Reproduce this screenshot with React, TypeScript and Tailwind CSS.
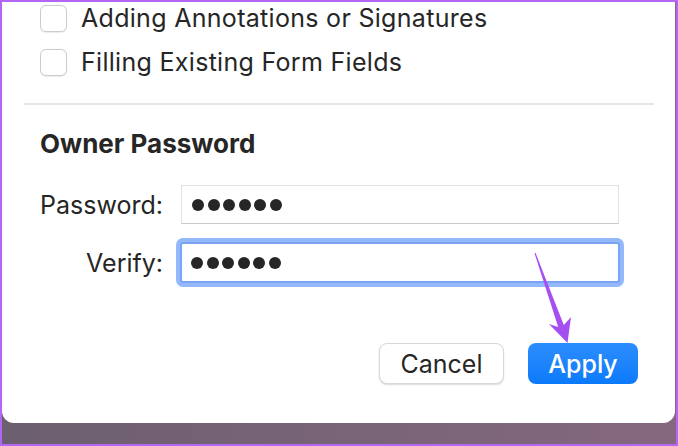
import React from "react";

const font = { fontFamily: 'Inter, "Noto Sans", "Liberation Sans", sans-serif' };

function Checkbox() {
  return (
    <div className="w-[27px] h-[27px] rounded-[6px] border border-[#cdcdcd] bg-white shadow-[0_0.5px_1px_rgba(0,0,0,0.08)] shrink-0" />
  );
}

function Dots() {
  return (
    <div className="flex items-center gap-[3.5px]">
      {[0, 1, 2, 3, 4, 5].map((i) => (
        <span key={i} className="block w-[12px] h-[12px] rounded-full bg-[#262626]" />
      ))}
    </div>
  );
}

export default function App() {
  return (
    <div className="relative w-[678px] h-[446px] bg-[#b366f4] p-[2px]" style={font}>
      <div className="w-full h-full bg-gradient-to-r from-[#6c5f70] to-[#85687f] overflow-hidden">
        <div className="w-[673px] h-[421px] bg-white rounded-b-[12px] text-[#262626] text-[25px] leading-[28px]">
          <div className="pl-[38px] pt-[2px]">
            <div className="flex items-center gap-[14px] h-[28px]">
              <Checkbox />
              <span className="tracking-[0.3px]">Adding Annotations or Signatures</span>
            </div>
            <div className="flex items-center gap-[14px] h-[28px] mt-[16px]">
              <Checkbox />
              <span className="tracking-[0.3px]">Filling Existing Form Fields</span>
            </div>
          </div>
          <div className="mx-[22px] mt-[27px] h-[2px] bg-[#e6e6e6] w-[630px]" />
          <div className="pl-[38px] mt-[25px] font-bold text-[26px] h-[28px]">Owner Password</div>
          <div className="grid grid-cols-[123px_1fr] items-center gap-x-[18px] pl-[38px] pr-[56px] mt-[27px]">
            <div className="text-right">Password:</div>
            <div className="h-[39px] border border-[#e2e2e2] border-b-[#c9c9c9] bg-white flex items-center pl-[10px]">
              <Dots />
            </div>
            <div className="text-right mt-[18px]">Verify:</div>
            <div className="mt-[18px] -ml-[1px] -mr-[1px] h-[41px] rounded-[3px] border-2 border-[#7aa3f3] shadow-[0_0_0_4px_#93b8fb] bg-white flex items-center pl-[9px]">
              <Dots />
            </div>
          </div>
          <div className="flex justify-end gap-[24px] pr-[37px] mt-[60px]">
            <button className="w-[125px] h-[41px] rounded-[8px] bg-white border border-[#d8d8d8] shadow-[0_1px_1.5px_rgba(0,0,0,0.15)] text-[25px] text-[#262626]">
              Cancel
            </button>
            <button className="w-[110px] h-[41px] rounded-[8px] bg-gradient-to-b from-[#2c8dfd] to-[#0a7afa] text-[25px] text-white font-medium">
              Apply
            </button>
          </div>
        </div>
      </div>
      <svg className="absolute left-0 top-0 pointer-events-none" width="678" height="446" viewBox="0 0 678 446">
        <polygon
          points="534.5,253.2 535.5,252.8 563.8,325 571,317 567.5,343 549,324 558.2,327"
          fill="#a64ff0"
        />
      </svg>
    </div>
  );
}
